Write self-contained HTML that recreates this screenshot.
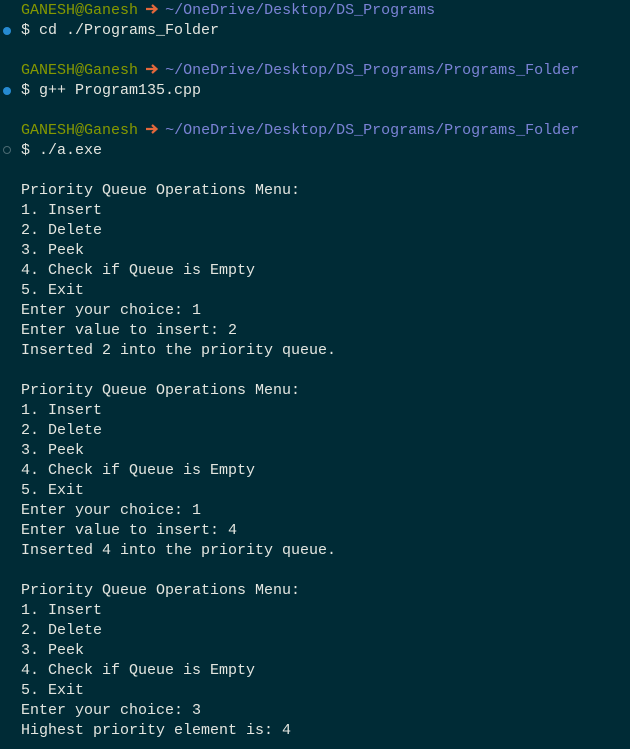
<!DOCTYPE html>
<html><head><meta charset="utf-8"><style>
html,body{margin:0;padding:0;width:630px;height:749px;overflow:hidden;background:#002b36;}
pre{margin:0;padding:1px 0 0 21px;font-family:"Liberation Mono",monospace;font-size:15px;line-height:20px;color:#e4e6e0;white-space:pre;}
.g{color:#859900}.b{color:#7b83d6}
.a{display:inline-block;width:9px;height:10px;position:relative;}
.a svg{position:absolute;left:-1px;top:0;overflow:visible}
.d{position:absolute;left:3px;width:8px;height:8px;border-radius:50%;}
</style></head><body>
<div class="d" style="top:27px;background:#268bd2"></div>
<div class="d" style="top:87px;background:#268bd2"></div>
<div class="d" style="top:146px;border:1px solid #4b6a72;box-sizing:border-box"></div>
<pre><span class="g">GANESH@Ganesh</span> <span class="a"><svg width="12" height="10"><path d="M0 5H10M6 1L10.5 5L6 9" stroke="#e3683c" stroke-width="2.2" fill="none"/></svg></span> <span class="b">~/OneDrive/Desktop/DS_Programs</span>
$ cd ./Programs_Folder

<span class="g">GANESH@Ganesh</span> <span class="a"><svg width="12" height="10"><path d="M0 5H10M6 1L10.5 5L6 9" stroke="#e3683c" stroke-width="2.2" fill="none"/></svg></span> <span class="b">~/OneDrive/Desktop/DS_Programs/Programs_Folder</span>
$ g++ Program135.cpp

<span class="g">GANESH@Ganesh</span> <span class="a"><svg width="12" height="10"><path d="M0 5H10M6 1L10.5 5L6 9" stroke="#e3683c" stroke-width="2.2" fill="none"/></svg></span> <span class="b">~/OneDrive/Desktop/DS_Programs/Programs_Folder</span>
$ ./a.exe

Priority Queue Operations Menu:
1. Insert
2. Delete
3. Peek
4. Check if Queue is Empty
5. Exit
Enter your choice: 1
Enter value to insert: 2
Inserted 2 into the priority queue.

Priority Queue Operations Menu:
1. Insert
2. Delete
3. Peek
4. Check if Queue is Empty
5. Exit
Enter your choice: 1
Enter value to insert: 4
Inserted 4 into the priority queue.

Priority Queue Operations Menu:
1. Insert
2. Delete
3. Peek
4. Check if Queue is Empty
5. Exit
Enter your choice: 3
Highest priority element is: 4</pre>
</body></html>
